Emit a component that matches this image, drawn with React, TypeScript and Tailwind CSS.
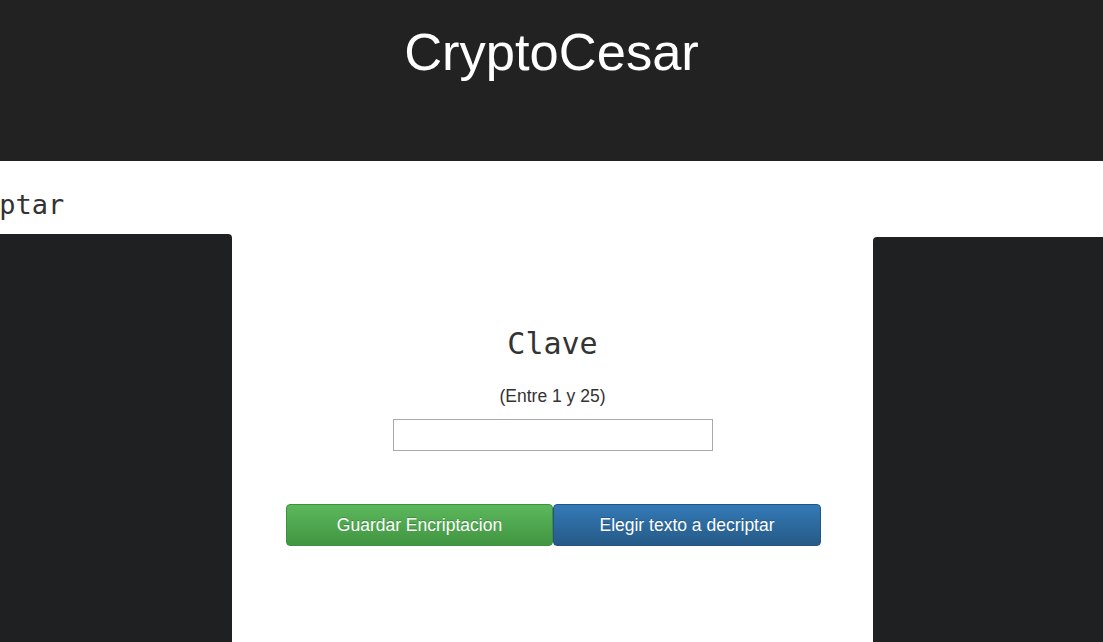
export default function App() {
  return (
    <div className="h-[642px] w-[1103px] overflow-hidden bg-white font-['Liberation_Sans',Arial,sans-serif]">
      <header className="flex h-[161px] justify-center bg-[#222222] pt-[22px]">
        <h1 className="text-[52.5px] leading-[60px] text-white">CryptoCesar</h1>
      </header>

      <main className="flex h-[481px] items-stretch">
        {/* encriptar column, scrolled partly out of view */}
        <section className="-ml-[93px] flex w-[325px] shrink-0 flex-col">
          <h2 className="pl-[11px] pt-[30px] font-['DejaVu_Sans_Mono',monospace] text-[27px] leading-[27px] text-[#333]">
            Encriptar
          </h2>
          <div className="mt-[16px] flex-1 rounded-tr-[4px] bg-[#1f2022]" />
        </section>

        <section className="flex w-[641px] shrink-0 flex-col items-center pt-[165px]">
          <h3 className="font-['DejaVu_Sans_Mono',monospace] text-[30px] leading-[36px] text-[#333]">Clave</h3>
          <p className="mt-[24px] text-[17.5px] leading-[20px] text-[#333]">(Entre 1 y 25)</p>
          <input
            type="number"
            className="mt-[13px] h-[32px] w-[320px] border border-[#a9a9a9] bg-white px-2 outline-none"
          />
          <div className="ml-[2px] mt-[53px] flex">
            <button className="h-[42px] w-[267px] rounded-[4px] border border-[#3e8f3e] bg-gradient-to-b from-[#5cb85c] to-[#419641] text-[17.5px] text-white [text-shadow:0_-1px_0_rgba(0,0,0,0.2)]">
              Guardar Encriptacion
            </button>
            <button className="h-[42px] w-[268px] rounded-[4px] border border-[#245580] bg-gradient-to-b from-[#337ab7] to-[#265a88] text-[17.5px] text-white [text-shadow:0_-1px_0_rgba(0,0,0,0.2)]">
              Elegir texto a decriptar
            </button>
          </div>
        </section>

        <section className="flex flex-1 flex-col pt-[76px]">
          <div className="flex-1 rounded-tl-[4px] bg-[#1f2022]" />
        </section>
      </main>
    </div>
  );
}
